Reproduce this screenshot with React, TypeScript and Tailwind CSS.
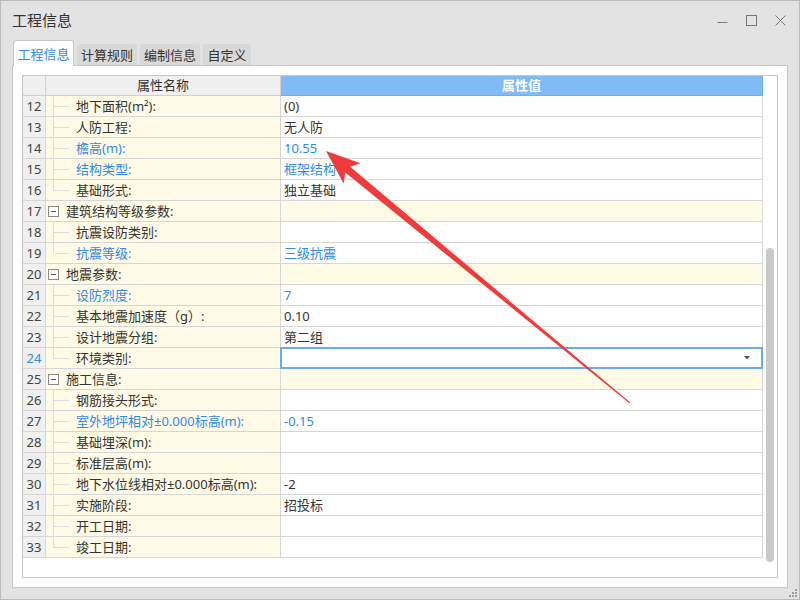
import React from "react";

// 一行属性
interface Linha {
  n: number;
  nome: string;
  valor?: string;
  tipo: "filho" | "grupo";
  azul?: boolean;
  ultimo?: boolean;
  selecionado?: boolean;
}

const linhas: Linha[] = [
  { n: 12, nome: "地下面积(m²):", valor: "(0)", tipo: "filho" },
  { n: 13, nome: "人防工程:", valor: "无人防", tipo: "filho" },
  { n: 14, nome: "檐高(m):", valor: "10.55", tipo: "filho", azul: true },
  { n: 15, nome: "结构类型:", valor: "框架结构", tipo: "filho", azul: true },
  { n: 16, nome: "基础形式:", valor: "独立基础", tipo: "filho", ultimo: true },
  { n: 17, nome: "建筑结构等级参数:", tipo: "grupo" },
  { n: 18, nome: "抗震设防类别:", tipo: "filho" },
  { n: 19, nome: "抗震等级:", valor: "三级抗震", tipo: "filho", azul: true, ultimo: true },
  { n: 20, nome: "地震参数:", tipo: "grupo" },
  { n: 21, nome: "设防烈度:", valor: "7", tipo: "filho", azul: true },
  { n: 22, nome: "基本地震加速度（g）:", valor: "0.10", tipo: "filho" },
  { n: 23, nome: "设计地震分组:", valor: "第二组", tipo: "filho" },
  { n: 24, nome: "环境类别:", tipo: "filho", ultimo: true, selecionado: true },
  { n: 25, nome: "施工信息:", tipo: "grupo" },
  { n: 26, nome: "钢筋接头形式:", tipo: "filho" },
  { n: 27, nome: "室外地坪相对±0.000标高(m):", valor: "-0.15", tipo: "filho", azul: true },
  { n: 28, nome: "基础埋深(m):", tipo: "filho" },
  { n: 29, nome: "标准层高(m):", tipo: "filho" },
  { n: 30, nome: "地下水位线相对±0.000标高(m):", valor: "-2", tipo: "filho" },
  { n: 31, nome: "实施阶段:", valor: "招投标", tipo: "filho" },
  { n: 32, nome: "开工日期:", tipo: "filho" },
  { n: 33, nome: "竣工日期:", tipo: "filho", ultimo: true },
];

function LinhaTabela({ l }: { l: Linha }) {
  const grupo = l.tipo === "grupo";
  const corTexto = l.azul ? "text-[#2f8ae8]" : "text-[#333]";

  return (
    <div className="flex h-[21px] border-b border-[#d6d6d6]">
      <div
        className={`w-[23px] shrink-0 border-r border-[#d6d6d6] bg-[#f0f0f0] flex items-center justify-center pt-px text-[13px] ${
          l.selecionado ? "text-[#2f8ae8]" : "text-[#444]"
        }`}
      >
        {l.n}
      </div>

      <div className="w-[235px] shrink-0 border-r border-[#d6d6d6] bg-[#fffbe6] flex items-center relative">
        {grupo ? (
          <>
            <div className="ml-[2px] w-[11px] h-[11px] border border-[#8a8a8a] bg-white flex items-center justify-center">
              <div className="w-[5px] h-px bg-[#555]" />
            </div>
            <span className="ml-[7px] pt-px text-[13px] text-[#333]">{l.nome}</span>
          </>
        ) : (
          <>
            <div
              className={`absolute left-[7px] top-0 w-px bg-[#dedede] ${l.ultimo ? "h-[11px]" : "h-[21px]"}`}
            />
            <div className="absolute left-[7px] top-[10px] w-[16px] h-px bg-[#dedede]" />
            <span className={`ml-[30px] pt-px text-[13px] ${corTexto}`}>{l.nome}</span>
          </>
        )}
      </div>

      <div
        className={`w-[482px] shrink-0 border-r border-[#d6d6d6] flex items-center relative ${
          grupo ? "bg-[#fffbe6]" : "bg-white"
        }`}
      >
        {l.valor && <span className={`ml-[3px] pt-px text-[13px] ${corTexto}`}>{l.valor}</span>}
        {l.selecionado && (
          <div className="absolute -top-px -left-px -right-px -bottom-px border-2 border-[#6ea9ea] flex items-center justify-end pr-[11px]">
            <svg width="6" height="4" viewBox="0 0 6 4">
              <path d="M0 0 L6 0 L3 3.5 Z" fill="#555" />
            </svg>
          </div>
        )}
      </div>
    </div>
  );
}

export default function App() {
  return (
    <div className="w-[800px] h-[600px] bg-[#e3e3e3] border border-[#bdbdbd] relative overflow-hidden font-['Noto_Sans','Noto_Sans_CJK_SC',sans-serif]">
      {/* 标题栏 */}
      <div className="h-[39px] flex items-center justify-between pl-[11px] pr-[13px]">
        <span className="text-[15px] text-[#333] font-['Noto_Sans_CJK_SC',sans-serif]">工程信息</span>
        <div className="flex items-center gap-[18px]">
          <svg width="11" height="11" viewBox="0 0 11 11">
            <path d="M0.5 7.5 H10.5" stroke="#777" strokeWidth="1" />
          </svg>
          <svg width="11" height="11" viewBox="0 0 11 11">
            <rect x="0.5" y="0.5" width="10" height="10" fill="none" stroke="#777" strokeWidth="1" />
          </svg>
          <svg width="11" height="11" viewBox="0 0 11 11">
            <path d="M0.5 0.5 L10.5 10.5 M10.5 0.5 L0.5 10.5" stroke="#777" strokeWidth="1" />
          </svg>
        </div>
      </div>

      {/* 选项卡 */}
      <div className="h-[25px] ml-[12px] flex items-end gap-[3px] text-[13px] font-['Noto_Sans_CJK_SC',sans-serif]">
        <div className="w-[61px] h-[26px] -mb-px relative z-10 bg-white border border-b-0 border-[#c6c6c6] rounded-t-[3px] flex items-center justify-center text-[#2f8ae8]">
          工程信息
        </div>
        <div className="w-[60px] h-[21px] bg-[#d9d9d9] rounded-t-[2px] flex items-center justify-center text-[#333]">
          计算规则
        </div>
        <div className="w-[60px] h-[21px] bg-[#d9d9d9] rounded-t-[2px] flex items-center justify-center text-[#333]">
          编制信息
        </div>
        <div className="w-[48px] h-[21px] bg-[#d9d9d9] rounded-t-[2px] flex items-center justify-center text-[#333]">
          自定义
        </div>
      </div>

      {/* 面板 */}
      <div className="ml-[11px] w-[776px] h-[523px] bg-white border border-[#c6c6c6] pt-[9px] pl-[9px]">
        <div className="w-[756px] h-[503px] border border-[#c6c6c6] flex">
          <div className="w-[740px] flex flex-col">
            <div className="flex h-[20px]">
              <div className="w-[23px] shrink-0 border-r border-b border-[#d0d0d0] bg-[#f0f0f0]" />
              <div className="w-[235px] shrink-0 border-r border-b border-[#d0d0d0] bg-[#f0f0f0] flex items-center justify-center text-[13px] text-[#333]">
                属性名称
              </div>
              <div className="w-[482px] shrink-0 border border-t-0 border-l-0 border-[#6faeee] bg-[#80bbf6] flex items-center justify-center text-[13px] text-white font-semibold">
                属性值
              </div>
            </div>
            {linhas.map((l) => (
              <LinhaTabela key={l.n} l={l} />
            ))}
          </div>
          <div className="w-[14px] flex flex-col pt-[172px]">
            <div className="ml-[3px] w-[8px] h-[314px] rounded-full bg-[#c9c9c9]" />
          </div>
        </div>
      </div>

      {/* 红色箭头标注 */}
      <svg className="absolute left-0 top-0 pointer-events-none" width="800" height="600" viewBox="0 0 800 600">
        <polygon
          points="325,150 359.5,162.2 349.2,165.8 629.3,401.6 628.7,402.4 344.3,171.6 342.6,182.4"
          fill="#f03b3b"
        />
      </svg>

      {/* 右下角拖拽 */}
      <svg className="absolute right-[2px] bottom-[2px]" width="8" height="8" viewBox="0 0 8 8">
        <rect x="6" y="0" width="2" height="2" fill="#a0a0a0" />
        <rect x="3" y="3" width="2" height="2" fill="#a0a0a0" />
        <rect x="6" y="3" width="2" height="2" fill="#a0a0a0" />
        <rect x="0" y="6" width="2" height="2" fill="#a0a0a0" />
        <rect x="3" y="6" width="2" height="2" fill="#a0a0a0" />
        <rect x="6" y="6" width="2" height="2" fill="#a0a0a0" />
      </svg>
    </div>
  );
}
